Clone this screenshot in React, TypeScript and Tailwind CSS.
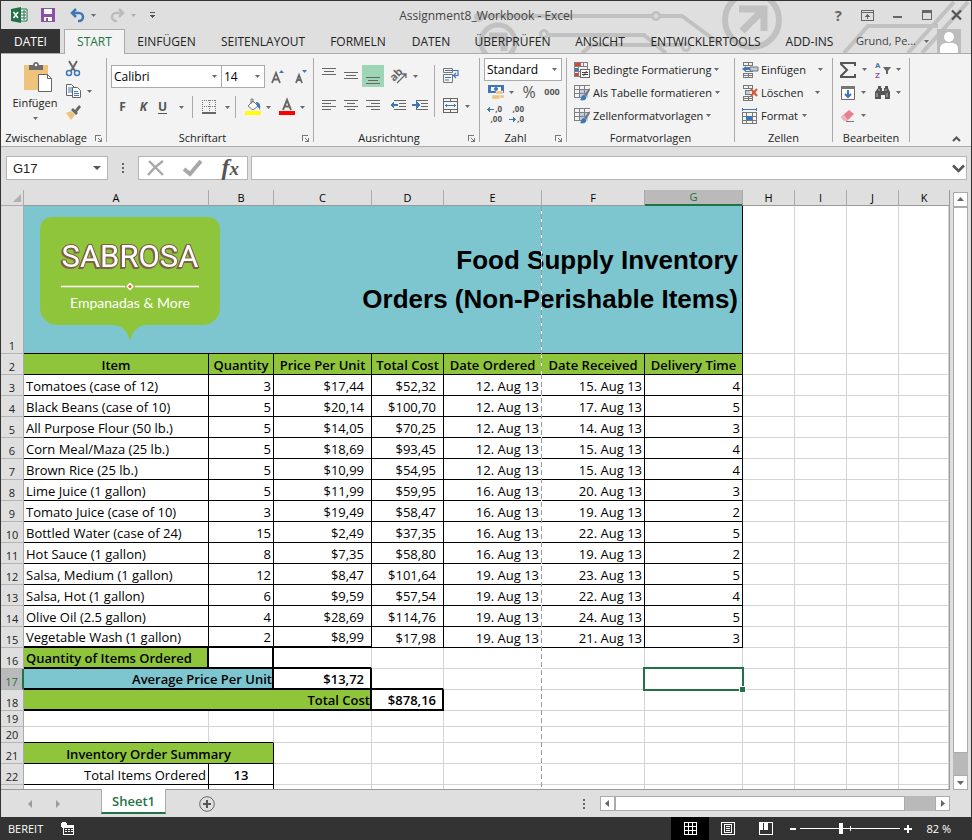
import type { ReactNode } from 'react';

const inventory: [string, string, string, string, string, string, string][] = [
  ['Tomatoes (case of 12)', '3', '$17,44', '$52,32', '12. Aug 13', '15. Aug 13', '4'],
  ['Black Beans (case of 10)', '5', '$20,14', '$100,70', '12. Aug 13', '17. Aug 13', '5'],
  ['All Purpose Flour (50 lb.)', '5', '$14,05', '$70,25', '12. Aug 13', '14. Aug 13', '3'],
  ['Corn Meal/Maza (25 lb.)', '5', '$18,69', '$93,45', '12. Aug 13', '15. Aug 13', '4'],
  ['Brown Rice (25 lb.)', '5', '$10,99', '$54,95', '12. Aug 13', '15. Aug 13', '4'],
  ['Lime Juice (1 gallon)', '5', '$11,99', '$59,95', '16. Aug 13', '20. Aug 13', '3'],
  ['Tomato Juice (case of 10)', '3', '$19,49', '$58,47', '16. Aug 13', '19. Aug 13', '2'],
  ['Bottled Water (case of 24)', '15', '$2,49', '$37,35', '16. Aug 13', '22. Aug 13', '5'],
  ['Hot Sauce (1 gallon)', '8', '$7,35', '$58,80', '16. Aug 13', '19. Aug 13', '2'],
  ['Salsa, Medium (1 gallon)', '12', '$8,47', '$101,64', '19. Aug 13', '23. Aug 13', '5'],
  ['Salsa, Hot (1 gallon)', '6', '$9,59', '$57,54', '19. Aug 13', '22. Aug 13', '4'],
  ['Olive Oil (2.5 gallon)', '4', '$28,69', '$114,76', '19. Aug 13', '24. Aug 13', '5'],
  ['Vegetable Wash (1 gallon)', '2', '$8,99', '$17,98', '19. Aug 13', '21. Aug 13', '3'],
];

/* ---------- small shared parts ---------- */

function Caret({ className = '' }: { className?: string }) {
  return (
    <svg className={`shrink-0 ${className}`} width="5" height="3" viewBox="0 0 5 3" aria-hidden="true">
      <path d="M0 0h5L2.5 3z" fill="#6a6a6a" />
    </svg>
  );
}

function Icon({ children, w = 16, h = 16, crisp = false }: { children: ReactNode; w?: number; h?: number; crisp?: boolean }) {
  return (
    <svg
      className="shrink-0 overflow-visible"
      width={w}
      height={h}
      viewBox={`0 0 ${w} ${h}`}
      fill="none"
      shapeRendering={crisp ? 'crispEdges' : 'auto'}
      aria-hidden="true"
    >
      {children}
    </svg>
  );
}

function Tool({ label, className = '', children }: { label: string; className?: string; children: ReactNode }) {
  return (
    <button type="button" aria-label={label} className={`flex h-[22px] items-center justify-center ${className}`}>
      {children}
    </button>
  );
}

function Group({ label, className, launcher = false, children }: { label: string; className: string; launcher?: boolean; children: ReactNode }) {
  return (
    <section aria-label={label} className={`flex h-[84px] shrink-0 flex-col border-r border-[#ababab] ${className}`}>
      <div className="flex-1">{children}</div>
      <div className="flex h-2 items-center px-1">
        <span className={`flex-1 text-center whitespace-nowrap ${launcher ? 'pr-2' : ''}`}>{label}</span>
        {launcher && (
          <button type="button" aria-label={`${label}: weitere Optionen`}>
            <Icon w={7} h={7} crisp>
              <path d="M0 0h6v1H1v5H0z" fill="#777" />
              <path d="M7 3v4H3V6h2V5H4V4H3V3h1v1h1v1h1V3z" fill="#777" />
            </Icon>
          </button>
        )}
      </div>
    </section>
  );
}

function Combo({ label, value, className }: { label: string; value: string; className: string }) {
  return (
    <div className={`relative h-[23px] ${className}`}>
      <select aria-label={label} className="size-full appearance-none border border-[#ababab] bg-white pl-[2px] text-[12px] text-black">
        <option>{value}</option>
      </select>
      <Caret className="pointer-events-none absolute top-[10px] right-[5px]" />
    </div>
  );
}

function Lines({ rows }: { rows: [number, number, number][] }) {
  return (
    <>
      {rows.map(([x, y, w]) => (
        <rect key={y} x={x} y={y} width={w} height="1" fill="#666" />
      ))}
    </>
  );
}

/* ---------- title bar and tabs ---------- */

function Circuit() {
  return (
    <svg className="pointer-events-none absolute top-0 right-0" width="500" height="53" viewBox="471 1 500 53" fill="none" stroke="#c1c1c1" strokeWidth="4" aria-hidden="true">
      <circle cx="498" cy="42" r="17" strokeWidth="5" />
      <path d="M489 36h15v15" strokeWidth="7" />
      <circle cx="479" cy="17" r="3" />
      <path d="M482 16h170M660 16h22l38 28" />
      <circle cx="656" cy="16" r="3.5" strokeWidth="3" />
      <circle cx="544" cy="34" r="3.5" strokeWidth="3" />
      <path d="M549 35h95l22 18M582 53l10-8h92" />
      <circle cx="686" cy="47" r="3.5" strokeWidth="3" />
      <circle cx="752" cy="20" r="27" strokeWidth="6" />
      <path d="M739 9h25v22M762 11l-20 20" strokeWidth="7" />
      <path d="M844 53l24-27h70M908 53l46-51M922 53l46-51" />
    </svg>
  );
}

function TitleBar() {
  return (
    <div className="relative flex h-7 items-center">
      <div className="flex w-40 items-center">
        <span className="ml-[10px] w-[30px]">
          <Icon w={17} h={16}>
            <path d="M9 2h7v12H9z" fill="#fff" stroke="#217346" />
            <path d="M10 5h5M10 8h5M10 11h5M13 3v10" stroke="#217346" />
            <path d="M0 2l10-2v16L0 14z" fill="#217346" />
            <path d="M2.5 5l4.5 6M7 5l-4.500 6" stroke="#fff" strokeWidth="1.500" />
          </Icon>
        </span>
        <button type="button" aria-label="Speichern" className="w-[29px]">
          <Icon w={14} h={14} crisp>
            <path d="M0 0h14v14H0z" fill="#8a4fa8" />
            <path d="M3 1h8v5H3zM3 9h8v4H3z" fill="#fff" />
            <path d="M5 10h2v3H5z" fill="#8a4fa8" />
          </Icon>
        </button>
        <button type="button" aria-label="Rückgängig" className="flex w-10 items-center gap-[6px]">
          <Icon w={15} h={14}>
            <path d="M2 5h7a4 4 0 0 1 0 8H8" stroke="#3f76b5" strokeWidth="2.500" />
            <path d="M6 1L2 5l4 4" stroke="#3f76b5" strokeWidth="2.500" />
          </Icon>
          <Caret />
        </button>
        <button type="button" aria-label="Wiederholen" className="flex w-9 items-center gap-[6px] opacity-40">
          <Icon w={15} h={14}>
            <path d="M13 5H6a4 4 0 0 0 0 8h1" stroke="#8a8a8a" strokeWidth="2.500" />
            <path d="M9 1l4 4-4 4" stroke="#8a8a8a" strokeWidth="2.500" />
          </Icon>
          <Caret />
        </button>
        <button type="button" aria-label="Schnellzugriff anpassen" className="ml-1">
          <Icon w={5} h={6} crisp>
            <path d="M0 0h5v1H0zM0 3h5v1H4v1H3v1H2V5H1V4H0z" fill="#555" />
          </Icon>
        </button>
      </div>
      <h1 className="flex-1 pt-[2px] text-center text-[#444]">Assignment8_Workbook - Excel</h1>
      <div className="flex w-40 items-center justify-end gap-[19px] pr-[9px]">
        <button type="button" aria-label="Hilfe" className="text-[15px] font-bold text-[#666]">?</button>
        <button type="button" aria-label="Menüband-Anzeigeoptionen">
          <Icon w={13} h={11} crisp>
            <path d="M.5.5h12v10H.5zM0 2.500h13" stroke="#666" />
            <path d="M6 4h1v5H6zM5 5h3v1H5zM4 6h5v1H4z" fill="#666" />
          </Icon>
        </button>
        <button type="button" aria-label="Minimieren">
          <Icon w={10} h={10} crisp><path d="M0 6h9v2H0z" fill="#666" /></Icon>
        </button>
        <button type="button" aria-label="Maximieren">
          <Icon w={10} h={10} crisp><path d="M.5.5h9v9H.5zM0 2h10" stroke="#666" /><path d="M0 0h10v3H0z" fill="#666" /></Icon>
        </button>
        <button type="button" aria-label="Schließen">
          <Icon w={11} h={10}><path d="M1 .5l9 9M10 .5l-9 9" stroke="#555" strokeWidth="2.200" /></Icon>
        </button>
      </div>
    </div>
  );
}

const tabs: [string, string][] = [
  ['EINFÜGEN', 'w-[83px]'],
  ['SEITENLAYOUT', 'w-[110px]'],
  ['FORMELN', 'w-[80px]'],
  ['DATEN', 'w-[66px]'],
  ['ÜBERPRÜFEN', 'w-[97px]'],
  ['ANSICHT', 'w-[78px]'],
  ['ENTWICKLERTOOLS', 'w-[133px]'],
  ['ADD-INS', 'w-[75px]'],
];

function TabRow() {
  return (
    <nav className="relative flex h-[25px] border-b border-[#ababab] text-[#222]" aria-label="Menüband">
      <button type="button" className="w-[59px] bg-[#333] pt-px text-white">DATEI</button>
      <button type="button" className="relative z-10 -mb-px ml-1 w-[61px] border border-b-0 border-[#ababab] bg-[#f3f3f3] text-[#217346]">START</button>
      <div className="flex min-w-0">
        {tabs.map(([name, width]) => (
          <button key={name} type="button" className={`shrink-0 pt-px whitespace-nowrap ${width}`}>{name}</button>
        ))}
      </div>
      <button type="button" className="ml-auto flex items-center gap-2 pr-[10px] text-[11px] whitespace-nowrap text-[#444]">
        <span>Grund, Pe...</span>
        <Caret />
        <Icon w={24} h={24}>
          <path d="M0 0h24v24H0z" fill="#bcbcbc" />
          <circle cx="12" cy="8" r="5" fill="#fff" />
          <path d="M3 24v-4c0-4 3-6 6-6h6c3 0 6 2 6 6v4z" fill="#fff" />
        </Icon>
      </button>
    </nav>
  );
}

/* ---------- ribbon ---------- */

function TableStyleIcon() {
  return (
    <Icon>
      <g shapeRendering="crispEdges">
        <path d="M5 4h9v9H5z" fill="#b9cde4" />
        <path d="M.5 12.500V.5h15M.5 12.500h9M0 4.500h16M0 8.500h10M5.500 0v13M10.500 0v9" stroke="#808080" />
      </g>
      <path d="M15.500 3l-5.500 7 2 2 4-7z" fill="#777" />
      <path d="M10 10c-3 0-2 3-4 5 3 1 7 0 6-3z" fill="#3f76b5" />
    </Icon>
  );
}

function CellsGrid() {
  return <path d="M1.500.5h9v3h-9zM6.500.5v3M1.500 11.500h9v4h-9zM6.500 11v5M1 13.500h10M3.500 5.500h7v4h-7z" stroke="#777" shapeRendering="crispEdges" />;
}

function Ribbon() {
  return (
    <div className="relative flex h-[93px] items-start border-b border-[#ababab] bg-[#f3f3f3] pt-1 text-[11px] text-[#222]">
      <Group label="Zwischenablage" className="w-[106px]" launcher>
        <div className="flex">
          <button type="button" className="flex w-[62px] flex-col items-center pt-1 pl-[6px]">
            <Icon w={34} h={31}>
              <g transform="translate(6 0)">
                <path d="M0 3h24v25H0z" fill="#eec47c" />
                <path d="M5 3h4c0-4 6-4 6 0h4v5H5z" fill="#6d6d6d" />
                <circle cx="12" cy="3" r="1.200" fill="#fff" />
                <path d="M14.500 12.500h9l4 4v13h-13z" fill="#fff" stroke="#666" />
                <path d="M23.500 12.500v4h4" stroke="#666" />
              </g>
            </Icon>
            <span className="leading-5">Einfügen</span>
            <Caret className="mt-1" />
          </button>
          <div className="flex w-[30px] flex-col">
            <Tool label="Ausschneiden" className="w-5">
              <Icon>
                <path d="M4 0l6 10M12 0L6 10" stroke="#666" strokeWidth="2" />
                <circle cx="4" cy="12" r="2.500" stroke="#3f76b5" strokeWidth="1.500" />
                <circle cx="12" cy="12" r="2.500" stroke="#3f76b5" strokeWidth="1.500" />
              </Icon>
            </Tool>
            <Tool label="Kopieren" className="w-[28px] gap-[5px] pl-1">
              <Icon>
                <path d="M.5 1.500h5l3 3v8h-8z" fill="#fff" stroke="#666" />
                <path d="M2 5h4M2 7h4M2 9h4" stroke="#3f76b5" />
                <path d="M6.500 4.500h5l3 3v7h-8z" fill="#fff" stroke="#666" />
                <path d="M8 8.500h4M8 10.500h5M8 12.500h5" stroke="#3f76b5" />
              </Icon>
              <Caret />
            </Tool>
            <Tool label="Format übertragen" className="w-5">
              <Icon>
                <path d="M1 8l5-2 4 4-4 5z" fill="#eec47c" />
                <path d="M6 5l2-2 5 5-2 2zM10 5l4-5 2 2-4 5z" fill="#666" />
              </Icon>
            </Tool>
          </div>
        </div>
      </Group>

      <Group label="Schriftart" className="w-[207px]" launcher>
        <div className="flex items-center pt-[7px] pl-1">
          <Combo label="Schriftart" value="Calibri" className="w-[111px]" />
          <Combo label="Schriftgrad" value="14" className="-ml-px w-[44px]" />
          <Tool label="Schriftgrad vergrößern" className="w-[25px]">
            <Icon w={14} h={14}>
              <path d="M1 13L5 3l4 10M2.500 9.500h5" stroke="#666" strokeWidth="1.800" />
              <path d="M8 3h5L10.500 0z" fill="#3f76b5" />
            </Icon>
          </Tool>
          <Tool label="Schriftgrad verkleinern" className="w-[21px]">
            <Icon w={14} h={14}>
              <path d="M2 13l3-8 3 8M3 10h4" stroke="#666" strokeWidth="1.800" />
              <path d="M8 0h5l-2.500 3z" fill="#3f76b5" />
            </Icon>
          </Tool>
        </div>
        <div className="flex items-center pt-2 pl-[5px] text-[12px] text-[#555]">
          <Tool label="Fett" className="w-[21px] font-bold"><span>F</span></Tool>
          <Tool label="Kursiv" className="w-[21px] font-bold italic"><span>K</span></Tool>
          <Tool label="Unterstrichen" className="w-[34px] gap-3 font-bold"><span className="underline underline-offset-2">U</span><Caret /></Tool>
          <span className="ml-1 h-[22px] w-px bg-[#ababab]" />
          <Tool label="Rahmen" className="ml-1 w-[38px] gap-[9px]">
            <Icon w={14} h={14} crisp>
              <path d="M.5 0v14M13.500 0v14M0 .5h14M7.500 0v14M0 6.500h14" stroke="#777" strokeDasharray="1 1" />
              <path d="M0 12h14v2H0z" fill="#666" />
            </Icon>
            <Caret />
          </Tool>
          <span className="h-[22px] w-px bg-[#ababab]" />
          <Tool label="Füllfarbe" className="ml-1 w-[36px] gap-[5px]">
            <Icon>
              <path d="M3 7l5-5 5 5-5 4z" fill="#fff" stroke="#777" />
              <path d="M6 5V0h2v4" stroke="#777" />
              <path d="M11 3c3 0 5 2 4 8-1-2-2-3-3-4z" fill="#3f76b5" />
              <path d="M0 12h16v4H0z" fill="#ff0" />
            </Icon>
            <Caret />
          </Tool>
          <Tool label="Schriftfarbe" className="w-[32px] gap-[5px]">
            <Icon>
              <path d="M4 11L8 1l4 10M5.500 7.500h5" stroke="#666" strokeWidth="2" />
              <path d="M0 12h16v4H0z" fill="#f00" />
            </Icon>
            <Caret />
          </Tool>
        </div>
      </Group>

      <Group label="Ausrichtung" className="w-[166px]" launcher>
        <div className="flex pt-[7px]">
          <div className="flex w-[121px] flex-col gap-2 border-r border-[#ababab] pl-1">
            <div className="flex">
              <Tool label="Oben ausrichten" className="w-[22px]"><Icon w={14} h={16} crisp><Lines rows={[[0, 0, 14], [2, 3, 10], [0, 6, 14]]} /></Icon></Tool>
              <Tool label="Zentriert ausrichten" className="w-[22px]"><Icon w={14} h={16} crisp><Lines rows={[[0, 4, 14], [2, 7, 10], [0, 10, 14]]} /></Icon></Tool>
              <Tool label="Unten ausrichten" className="w-[22px] bg-[#9fd5b7]"><Icon w={14} h={16} crisp><Lines rows={[[0, 9, 14], [2, 12, 10], [0, 15, 14]]} /></Icon></Tool>
              <Tool label="Ausrichtung" className="ml-[6px] w-7 gap-[5px]">
                <Icon w={17} h={16}>
                  <text x="0" y="11" fontSize="11" fontWeight="700" fontFamily="Noto Sans, sans-serif" fill="#666" transform="rotate(-45 5 9)">ab</text>
                  <path d="M6 15l9-9M11 6h4v4" stroke="#666" strokeWidth="1.300" />
                </Icon>
                <Caret />
              </Tool>
            </div>
            <div className="flex">
              <Tool label="Linksbündig" className="w-[22px]"><Icon w={14} h={12} crisp><Lines rows={[[0, 0, 14], [0, 3, 9], [0, 6, 14], [0, 9, 9]]} /></Icon></Tool>
              <Tool label="Zentriert" className="w-[22px]"><Icon w={14} h={12} crisp><Lines rows={[[0, 0, 14], [3, 3, 8], [0, 6, 14], [3, 9, 8]]} /></Icon></Tool>
              <Tool label="Rechtsbündig" className="w-[22px]"><Icon w={14} h={12} crisp><Lines rows={[[0, 0, 14], [5, 3, 9], [0, 6, 14], [5, 9, 9]]} /></Icon></Tool>
              <Tool label="Einzug verkleinern" className="ml-[3px] w-[22px]">
                <Icon w={16} h={12} crisp>
                  <Lines rows={[[4, 0, 12], [9, 3, 7], [9, 6, 7], [4, 9, 12]]} />
                  <path d="M0 5l4-4v3h4v2H4v3z" fill="#3f76b5" />
                </Icon>
              </Tool>
              <Tool label="Einzug vergrößern" className="w-[22px]">
                <Icon w={16} h={12} crisp>
                  <Lines rows={[[4, 0, 12], [9, 3, 7], [9, 6, 7], [4, 9, 12]]} />
                  <path d="M8 5L4 1v3H0v2h4v3z" fill="#3f76b5" />
                </Icon>
              </Tool>
            </div>
          </div>
          <div className="flex flex-col gap-2 pl-2">
            <Tool label="Zeilenumbruch" className="w-4">
              <Icon>
                <path d="M.5.500h9v4h-9zM.5 6.500h9v8h-9z" stroke="#777" />
                <path d="M2 2.500h13v5h-4M13 5l-2.500 2.500L13 10M2 9.500h6M2 12h4" stroke="#3f76b5" strokeWidth="1.200" />
              </Icon>
            </Tool>
            <Tool label="Verbinden und zentrieren" className="w-[27px] gap-[6px]">
              <Icon crisp>
                <path d="M.5.500h14v14H.5zM0 3.500h15M0 11.500h15M7.500 0v4M7.500 11v4" stroke="#666" />
                <path d="M2 7h11v1H2zM3 6h1v3H3zM11 6h1v3h-1z" fill="#3f76b5" />
              </Icon>
              <Caret />
            </Tool>
          </div>
        </div>
      </Group>

      <Group label="Zahl" className="w-[87px]" launcher>
        <div className="px-1">
          <Combo label="Zahlenformat" value="Standard" className="w-full" />
        </div>
        <div className="flex h-[22px] items-center pl-[6px] text-[#555]">
          <Tool label="Buchhaltungsformat" className="w-[30px] gap-[5px]">
            <Icon>
              <path d="M0 1h16v8H0z" fill="#3f76b5" />
              <path d="M3 3h10v4H3z" fill="#fff" />
              <circle cx="8" cy="5" r="2" fill="#3f76b5" />
              <path d="M8 7h7v3H8zM4 11h8v4H4zM12 11h4v3h-4z" fill="#eec47c" stroke="#f3f3f3" strokeWidth=".5" />
            </Icon>
            <Caret />
          </Tool>
          <Tool label="Prozentformat" className="w-[26px] text-[16px]"><span>%</span></Tool>
          <Tool label="1.000er-Trennzeichen" className="w-[20px] text-[9px] font-bold"><span>000</span></Tool>
        </div>
        <div className="flex h-[22px] items-center gap-[7px] pl-[7px] text-[8px] leading-[10px] font-bold text-[#555]">
          <button type="button" aria-label="Dezimalstelle hinzufügen" className="w-[15px] text-right">
            <span className="flex items-center justify-end gap-px"><Icon w={7} h={5} crisp><path d="M0 2h7v1H0zM1 1h1v3H1zM2 0h1v5H2z" fill="#3f76b5" /></Icon>,0</span>,00
          </button>
          <button type="button" aria-label="Dezimalstelle löschen" className="w-[15px] text-right">
            ,00<span className="flex items-center justify-end gap-px"><Icon w={7} h={5} crisp><path d="M0 2h7v1H0zM5 1h1v3H5zM4 0h1v5H4z" fill="#3f76b5" /></Icon>,0</span>
          </button>
        </div>
      </Group>

      <Group label="Formatvorlagen" className="w-[168px]">
        <div className="flex flex-col items-start pl-[7px]">
          <button type="button" className="flex h-[23px] items-center gap-[3px] whitespace-nowrap">
            <Icon>
              <g shapeRendering="crispEdges">
                <path d="M.5.500h13v14H.5zM0 4.500h14M0 9.500h6M4.500 0v15M9.500 0v5" stroke="#808080" />
                <path d="M1 1h6v3H1zM1 6h3v3H1zM1 11h3v3H1z" fill="#cf4a33" />
                <path d="M1 6h3v3H1z" fill="#3f76b5" />
                <path d="M6.500 7.500h9v8h-9z" fill="#fff" stroke="#666" />
              </g>
              <path d="M8 10.500h6M8 12.500h6M12.500 9l-3 5" stroke="#444" />
            </Icon>
            Bedingte Formatierung <Caret />
          </button>
          <button type="button" className="flex h-[23px] items-center gap-[3px] whitespace-nowrap">
            <TableStyleIcon /> Als Tabelle formatieren <Caret />
          </button>
          <button type="button" className="flex h-[23px] items-center gap-[3px] whitespace-nowrap">
            <TableStyleIcon /> Zellenformatvorlagen <Caret />
          </button>
        </div>
      </Group>

      <Group label="Zellen" className="w-[98px]">
        <div className="flex flex-col pl-[7px]">
          <button type="button" className="flex h-[23px] w-[81px] items-center gap-[3px]">
            <Icon>
              <CellsGrid />
              <path d="M8 5h8v4H8z" fill="#b9cde4" stroke="#777" />
              <path d="M0 7l4-3v2h4v2H4v2z" fill="#3f76b5" />
            </Icon>
            <span className="flex-1 text-left">Einfügen</span> <Caret />
          </button>
          <button type="button" className="flex h-[23px] w-[78px] items-center gap-[3px]">
            <Icon>
              <CellsGrid />
              <path d="M4 6h4v3H4z" fill="#b9cde4" />
              <path d="M9 4l6 7M15 4l-6 7" stroke="#d8553a" strokeWidth="2" />
            </Icon>
            <span className="flex-1 text-left">Löschen</span> <Caret />
          </button>
          <button type="button" className="flex h-[23px] w-[65px] items-center gap-[3px]">
            <Icon crisp>
              <path d="M.5 4.500h14v11H.5zM0 8.500h15M0 12.500h15M4.500 4v12M10.500 4v12" stroke="#777" />
              <path d="M4 8h6v4H4zM1 1h13v1H1zM0 0h1v3H0zM14 0h1v3h-1z" fill="#3f76b5" />
            </Icon>
            <span className="flex-1 text-left">Format</span> <Caret />
          </button>
        </div>
      </Group>

      <Group label="Bearbeiten" className="w-[77px]">
        <div className="grid grid-cols-[35px_34px] pl-[7px]">
          <Tool label="Summe" className="h-[23px] justify-start gap-[6px]">
            <Icon><path d="M15 4V1H1v1l6 6-6 6v1h14v-3" stroke="#555" strokeWidth="2" /></Icon><Caret />
          </Tool>
          <Tool label="Sortieren und Filtern" className="h-[23px] justify-start gap-[5px]">
            <Icon>
              <text x="0" y="6" fontSize="8" fontWeight="700" fontFamily="Roboto, sans-serif" fill="#3f76b5">A</text>
              <text x="0" y="16" fontSize="8" fontWeight="700" fontFamily="Roboto, sans-serif" fill="#8a4fa8">Z</text>
              <path d="M8 5h8l-3 4v3h-2V9z" fill="#666" />
            </Icon>
            <Caret />
          </Tool>
          <Tool label="Füllbereich" className="h-[23px] justify-start gap-[5px]">
            <Icon>
              <path d="M1.500 1.500h13v13h-13z" fill="#fff" stroke="#666" />
              <path d="M1 1h14v3H1z" fill="#777" />
              <path d="M8 5v7M5 9l3 3 3-3" stroke="#3f76b5" strokeWidth="2" />
            </Icon>
            <Caret />
          </Tool>
          <Tool label="Suchen und Auswählen" className="h-[23px] justify-start gap-[5px]">
            <Icon>
              <path d="M3 1h3v2h1v3h2V3h1V1h3v2l2 4v7h-5v-4H6v4H0V7l3-4z" fill="#555" />
              <path d="M2 8v4M12 8v4M4 4v2M11 4v2" stroke="#bbb" />
            </Icon>
            <Caret />
          </Tool>
          <Tool label="Löschen" className="h-[23px] justify-start gap-[5px]">
            <Icon>
              <path d="M1 9l8-7 5 4-7 7H4z" fill="#e8818f" />
              <path d="M1 9l3-2 4 5-1 1H4z" fill="#f3b4bb" />
              <path d="M6 13.500h8" stroke="#777" />
            </Icon>
            <Caret />
          </Tool>
        </div>
      </Group>
      <button type="button" aria-label="Menüband reduzieren" className="mr-[10px] mb-1 ml-auto self-end">
        <Icon w={9} h={6}><path d="M1 5l3.500-3.500L8 5" stroke="#555" strokeWidth="2" /></Icon>
      </button>
    </div>
  );
}

/* ---------- formula bar ---------- */

function Dots() {
  return (
    <span className="flex flex-col gap-[2px]" aria-hidden="true">
      <i className="size-[2px] bg-[#666]" />
      <i className="size-[2px] bg-[#666]" />
      <i className="size-[2px] bg-[#666]" />
    </span>
  );
}

function FormulaBar() {
  return (
    <div className="flex h-[43px] items-center pr-1 pb-px pl-[5px]">
      <div className="relative h-6 w-[102px]">
        <input aria-label="Namenfeld" defaultValue="G17" className="size-full border border-[#b5b5b5] bg-white pl-[6px] font-['Liberation_Sans',sans-serif] text-[13px] text-[#222]" />
        <svg className="absolute top-[10px] right-[7px]" width="8" height="4" viewBox="0 0 8 4" aria-hidden="true"><path d="M0 0h8L4 4z" fill="#555" /></svg>
      </div>
      <span className="flex w-[30px] justify-center"><Dots /></span>
      <div className="flex h-6 w-[110px] items-center justify-between border border-[#b5b5b5] bg-white px-2">
        <button type="button" aria-label="Abbrechen">
          <Icon w={18} h={16}><path d="M2 1l14 14M16 1C10 5 5 10 1 15" stroke="#a8a8a8" strokeWidth="2.400" /></Icon>
        </button>
        <button type="button" aria-label="Eingeben">
          <Icon w={20} h={16}><path d="M1 9l6 5L18 1" stroke="#a8a8a8" strokeWidth="4" /></Icon>
        </button>
        <button type="button" aria-label="Funktion einfügen" className="font-['Liberation_Serif',serif] text-[24px] leading-[22px] font-bold text-[#555] italic">
          f<span className="text-[19px]">x</span>
        </button>
      </div>
      <div className="relative ml-[3px] h-6 flex-1">
        <input aria-label="Bearbeitungsleiste" className="size-full border border-[#b5b5b5] bg-white px-2" />
        <svg className="absolute top-[8px] right-[2px]" width="13" height="9" viewBox="0 0 13 9" fill="none" aria-hidden="true">
          <path d="M1 1.500L6.500 7 12 1.500" stroke="#555" strokeWidth="2.500" />
        </svg>
      </div>
    </div>
  );
}

/* ---------- worksheet ---------- */

function Logo() {
  return (
    <svg className="shrink-0" width="180" height="125" viewBox="0 0 180 125" role="img" aria-label="Sabrosa">
      <path d="M13 0h154c8 0 13 5 13 13v78c0 10-8 17-17 17h-54c-10 0-16 4-19 16-3-12-9-16-19-16H17c-9 0-17-7-17-17V13C0 5 5 0 13 0z" fill="#8fc53a" />
      <text
        className="[filter:drop-shadow(-1px_1px_0_#80604a)]"
        x="90"
        y="50"
        textAnchor="middle"
        fontFamily="Roboto, sans-serif"
        fontSize="31"
        fill="#fff"
        stroke="#80604a"
        strokeWidth="2"
        paintOrder="stroke"
      >
        SABROSA
      </text>
      <path d="M21 69.500h64M95 69.500h64" stroke="#fff" strokeWidth="1.500" />
      <path d="M90 65.500l4 4-4 4-4-4z" fill="#fff" />
      <circle cx="90" cy="69.500" r="1.500" fill="#e8502e" />
      <text x="90" y="91" textAnchor="middle" fontFamily="Lato, sans-serif" fontSize="14" fill="#fff">Empanadas &amp; More</text>
    </svg>
  );
}

const line = 'border-r border-b border-[#d4d4d4]';
const boxed = 'border-r border-b border-black';
const band = 'bg-[#8fc53a] font-semibold';

function Blank({ count }: { count: number }) {
  return (
    <>
      {Array.from({ length: count }, (_, i) => (
        <td key={i} className={line} />
      ))}
    </>
  );
}

function RowHead({ n, active = false }: { n?: number; active?: boolean }) {
  return (
    <th
      scope="row"
      className={
        active
          ? 'border-r-2 border-b border-r-[#217346] border-b-[#b5b5b5] bg-[#bababa] align-bottom text-[11px] leading-[15px] font-normal text-[#217346]'
          : 'border-r border-b border-r-[#ababab] border-b-[#b5b5b5] bg-[#dfdfdf] align-bottom text-[11px] leading-[15px] font-normal text-[#222]'
      }
    >
      {n}
    </th>
  );
}

function Sheet() {
  return (
    <div className="relative min-w-0 flex-1 overflow-hidden border-r border-b border-[#999] bg-white">
      <table className="w-full table-fixed border-separate border-spacing-0 text-black [&_td]:p-0 [&_td]:px-[2px] [&_td]:align-bottom [&_td]:leading-[17px] [&_td]:whitespace-nowrap [&_th]:p-0 [&_th]:whitespace-nowrap">
        <colgroup>
          <col className="w-[23px]" />
          <col className="w-[185px]" />
          <col className="w-[65px]" />
          <col className="w-[98px]" />
          <col className="w-[72px]" />
          <col className="w-[98px]" />
          <col className="w-[103px]" />
          <col className="w-[98px]" />
          <col className="w-[52px]" />
          <col className="w-[52px]" />
          <col className="w-[52px]" />
          <col />
        </colgroup>
        <thead>
          <tr className="h-4 bg-[#dfdfdf] text-[11px]">
            <td className="border-r border-b border-[#ababab] leading-none!">
              <svg className="mb-[3px] ml-auto" width="8" height="8" viewBox="0 0 8 8" aria-hidden="true"><path d="M8 0v8H0z" fill="#b0b0b0" /></svg>
            </td>
            {['A', 'B', 'C', 'D', 'E', 'F', 'G', 'H', 'I', 'J', 'K'].map((c) => (
              <th
                key={c}
                scope="col"
                className={
                  c === 'G'
                    ? 'border-r border-b-2 border-r-[#ababab] border-b-[#217346] bg-[#bababa] align-bottom leading-[14px] font-normal text-[#217346]'
                    : 'border-r border-b border-r-[#ababab] border-b-[#999] align-bottom leading-[14px] font-normal last:border-r-0'
                }
              >
                {c}
              </th>
            ))}
          </tr>
        </thead>
        <tbody className="text-[13px]">
          <tr className="h-[148px]">
            <RowHead n={1} />
            <td colSpan={7} className="border-r border-b border-black bg-[#7ec6cf] align-middle!">
              <div className="flex items-center justify-between pr-[2px] pl-[14px]">
                <Logo />
                <h2 className="text-right font-['Liberation_Sans',sans-serif] text-[26px] leading-[39px] font-bold">
                  Food Supply Inventory
                  <br />
                  Orders (Non-Perishable Items)
                </h2>
              </div>
            </td>
            <Blank count={4} />
          </tr>
          <tr className="h-[21px]">
            <RowHead n={2} />
            {['Item', 'Quantity', 'Price Per Unit', 'Total Cost', 'Date Ordered', 'Date Received', 'Delivery Time'].map((h) => (
              <th key={h} scope="col" className={`${boxed} ${band} align-bottom leading-[17px]`}>{h}</th>
            ))}
            <Blank count={4} />
          </tr>
          {inventory.map((row, i) => {
            const last = i === inventory.length - 1;
            return (
              <tr key={row[0]} className="h-[21px]">
                <RowHead n={i + 3} />
                {row.map((value, j) => (
                  <td
                    key={j}
                    className={`${j === 0 ? 'text-left' : j === 2 || j === 3 ? 'pr-[7px]! text-right' : 'text-right'} ${last && j < 3 ? 'border-r border-b-2 border-black' : boxed}`}
                  >
                    {value}
                  </td>
                ))}
                <Blank count={4} />
              </tr>
            );
          })}
          <tr className="h-[21px]">
            <RowHead n={16} />
            <td className={`border-r-2 border-b-2 border-black ${band}`}>Quantity of Items Ordered</td>
            <td className="border-r-2 border-b-2 border-black" />
            <td className="border-r border-b-2 border-r-[#d4d4d4] border-b-black" />
            <Blank count={8} />
          </tr>
          <tr className="h-[21px]">
            <RowHead n={17} active />
            <td colSpan={2} className="border-r-2 border-b-2 border-black bg-[#7ec6cf] pr-0! text-right font-semibold">Average Price Per Unit</td>
            <td className="border-r-2 border-b-2 border-black pr-[6px]! text-right font-semibold">$13,72</td>
            <td className="border-r border-b-2 border-r-[#d4d4d4] border-b-black" />
            <Blank count={2} />
            <td className={`relative ${line}`}>
              <div className="absolute -top-[2px] -right-[2px] -bottom-[2px] -left-[2px] border-2 border-[#217346]">
                <i className="absolute -right-[4px] -bottom-[4px] size-[7px] border border-white bg-[#217346]" />
              </div>
            </td>
            <Blank count={4} />
          </tr>
          <tr className="h-[21px]">
            <RowHead n={18} />
            <td colSpan={3} className={`border-r-2 border-b-2 border-black pr-0! text-right ${band}`}>Total Cost</td>
            <td className="border-r-2 border-b-2 border-black pr-[6px]! text-right font-semibold">$878,16</td>
            <Blank count={7} />
          </tr>
          <tr className="h-4">
            <RowHead n={19} />
            <Blank count={11} />
          </tr>
          <tr className="h-4">
            <RowHead n={20} />
            <td className="border-r border-b border-r-[#d4d4d4] border-b-black" />
            <td className="border-r border-b border-r-[#d4d4d4] border-b-black" />
            <Blank count={9} />
          </tr>
          <tr className="h-[21px]">
            <RowHead n={21} />
            <td colSpan={2} className={`${boxed} ${band} text-center`}>Inventory Order Summary</td>
            <Blank count={9} />
          </tr>
          <tr className="h-[21px]">
            <RowHead n={22} />
            <td className={`${boxed} text-right`}>Total Items Ordered</td>
            <td className={`${boxed} text-center font-semibold`}>13</td>
            <Blank count={9} />
          </tr>
          <tr className="h-[21px]">
            <RowHead />
            <td className={boxed} />
            <td className={boxed} />
            <Blank count={9} />
          </tr>
        </tbody>
      </table>
      {/* automatic page break */}
      <div className="pointer-events-none absolute top-4 bottom-0 left-[540px] w-px bg-[repeating-linear-gradient(to_bottom,#9a9a9a_0_5px,#ffffff_5px_8px)]" />
    </div>
  );
}

function ScrollButton({ label, d, className }: { label: string; d: string; className: string }) {
  return (
    <button type="button" aria-label={label} className={`flex size-[15px] shrink-0 items-center justify-center border border-[#ababab] bg-white ${className}`}>
      <Icon w={7} h={7}><path d={d} fill="#666" /></Icon>
    </button>
  );
}

function SheetBar() {
  return (
    <div className="flex h-[27px] shrink-0 items-center">
      <div className="flex w-[100px] gap-[22px] pl-[26px]">
        <button type="button" aria-label="Vorheriges Blatt"><Icon w={6} h={8}><path d="M5 0v8L1 4z" fill="#9a9a9a" /></Icon></button>
        <button type="button" aria-label="Nächstes Blatt"><Icon w={6} h={8}><path d="M1 0v8l4-4z" fill="#9a9a9a" /></Icon></button>
      </div>
      <button type="button" className="relative z-10 -mt-px h-[25px] w-[65px] self-start border-x border-b-2 border-x-[#ababab] border-b-[#217346] bg-white text-[13px] font-semibold text-[#217346]">
        Sheet1
      </button>
      <button type="button" aria-label="Neues Blatt" className="ml-[33px]">
        <Icon w={16} h={16}>
          <circle cx="8" cy="8" r="7.300" stroke="#666" />
          <path d="M8 4v8M4 8h8" stroke="#555" strokeWidth="2" />
        </Icon>
      </button>
      <div className="mr-[21px] ml-auto flex items-center">
        <Dots />
        <div className="ml-[15px] flex h-[15px] w-[350px] bg-[#b9b9b9]">
          <ScrollButton label="Nach links" d="M5 0v7L1 3.500z" className="" />
          <div className="h-full flex-1 border border-[#ababab] bg-white" />
          <ScrollButton label="Nach rechts" d="M2 0v7l4-3.500z" className="ml-[30px]" />
        </div>
      </div>
    </div>
  );
}

function StatusBar() {
  return (
    <footer className="flex h-[23px] shrink-0 items-center bg-[#333] pl-[7px] text-[11px] text-white">
      <span>BEREIT</span>
      <button type="button" aria-label="Makro aufzeichnen" className="ml-[18px]">
        <Icon w={13} h={13} crisp>
          <path d="M2.500 3.500h10v9h-10z" stroke="#fff" />
          <path d="M2 3h11v3H2zM4 7h2v1H4zM7 7h2v1H7zM10 7h2v1h-2zM4 9h2v1H4zM7 9h2v1H7zM10 9h2v1h-2z" fill="#fff" />
          <circle cx="3" cy="3" r="3" fill="#fff" />
        </Icon>
      </button>
      <div className="ml-auto flex h-full items-center">
        <button type="button" aria-label="Normal" className="flex h-full w-[38px] items-center justify-center bg-black">
          <Icon w={13} h={13} crisp><path d="M.5.500h12v12H.5zM4.500 0v13M8.500 0v13M0 4.500h13M0 8.500h13" stroke="#fff" /></Icon>
        </button>
        <button type="button" aria-label="Seitenlayout" className="ml-3">
          <Icon w={14} h={13} crisp><path d="M.5.500h13v12H.5zM3.500 2.500h7v8h-7zM5 4.500h4M5 6.500h4M5 8.500h4" stroke="#fff" /></Icon>
        </button>
        <button type="button" aria-label="Umbruchvorschau" className="ml-6">
          <Icon w={14} h={13} crisp><path d="M.5.500h13v12H.5z" stroke="#fff" /><path d="M1 1h3v7H1zM5 1h4v7H5z" fill="#fff" /></Icon>
        </button>
        <button type="button" aria-label="Verkleinern" className="ml-[17px]"><Icon w={6} h={2} crisp><path d="M0 0h6v2H0z" fill="#fff" /></Icon></button>
        <div className="relative ml-1 flex h-full w-[100px] items-center">
          <input
            type="range"
            aria-label="Zoom"
            min={0}
            max={100}
            defaultValue={41}
            className="m-0 h-3 w-full appearance-none bg-transparent [&::-webkit-slider-runnable-track]:h-px [&::-webkit-slider-runnable-track]:bg-white [&::-webkit-slider-thumb]:-mt-[5px] [&::-webkit-slider-thumb]:h-[11px] [&::-webkit-slider-thumb]:w-1 [&::-webkit-slider-thumb]:appearance-none [&::-webkit-slider-thumb]:bg-white"
          />
          <i className="absolute top-[9px] left-1/2 h-[5px] w-px bg-white" />
        </div>
        <button type="button" aria-label="Vergrößern" className="ml-1"><Icon w={8} h={8} crisp><path d="M3 0h2v8H3zM0 3h8v2H0z" fill="#fff" /></Icon></button>
        <span className="w-[59px] pr-5 text-right whitespace-nowrap">82 %</span>
      </div>
    </footer>
  );
}

export default function App() {
  return (
    <div className="flex h-screen flex-col overflow-hidden border-t border-r border-l border-[#333] bg-[#dfdfdf] font-['Open_Sans','Noto_Sans',sans-serif] text-[12px] leading-4">
      <header className="relative shrink-0">
        <Circuit />
        <TitleBar />
        <TabRow />
        <Ribbon />
        <FormulaBar />
      </header>
      <main className="flex min-h-0 flex-1">
        <Sheet />
        <div className="mt-[2px] mr-[3px] ml-[3px] flex w-[15px] flex-col bg-[#b9b9b9]">
          <ScrollButton label="Nach oben" d="M0 5h7L3.500 1z" className="" />
          <div className="mb-[22px] w-full flex-1 border border-[#ababab] bg-white" />
          <ScrollButton label="Nach unten" d="M0 2h7L3.500 6z" className="" />
        </div>
      </main>
      <SheetBar />
      <StatusBar />
    </div>
  );
}
